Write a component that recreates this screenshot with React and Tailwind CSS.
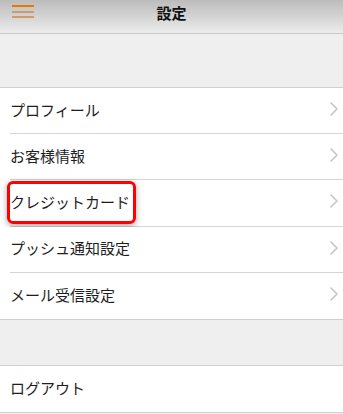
const items = ["プロフィール", "お客様情報", "クレジットカード", "プッシュ通知設定", "メール受信設定"];

function Chevron() {
  return (
    <svg width="8" height="14" viewBox="0 0 8 14" fill="none" className="mr-[5px]">
      <polyline points="1,1 7,7 1,13" stroke="#c5c5ca" strokeWidth="1.6" strokeLinecap="round" strokeLinejoin="round" />
    </svg>
  );
}

function Row({ label, last, chevron = true, highlight }) {
  return (
    <div className="relative flex h-[46.2px] items-center bg-white pl-[10px]">
      <div className={`flex h-full flex-1 items-center pb-[3px] ${last ? "" : "border-b border-[#d4d4d4]"}`}>
        <span className="flex-1 text-[15px] leading-none text-[#1e1e1e]">{label}</span>
        {chevron && <Chevron />}
      </div>
      {highlight && (
        <div className="pointer-events-none absolute left-[7px] top-[1px] h-[43px] w-[129px] rounded-[6px] border-[3px] border-[#ff0000] shadow-[0_2px_6px_rgba(0,0,0,0.35)]" />
      )}
    </div>
  );
}

export default function App() {
  return (
    <div
      className="h-[414px] w-[343px] overflow-hidden bg-[#efefef]"
      style={{ fontFamily: '"Noto Sans CJK JP", "Noto Sans", sans-serif' }}
    >
      {/* Header */}
      <div className="relative flex h-[34px] items-center justify-center border-b border-[#c8c8c8] bg-gradient-to-b from-[#bcbcbc] to-[#ececec] pb-[9px]">
        <button className="absolute left-[12px] top-[5px] flex w-[22px] flex-col gap-[3.5px]">
          <span className="block h-[2px] w-full bg-[#e07a00]" />
          <span className="block h-[2px] w-full bg-[#d09a6a]" />
          <span className="block h-[2px] w-full bg-[#d09a6a]" />
        </button>
        <h1 className="text-[15px] font-bold leading-none text-[#111]">設定</h1>
      </div>

      <div className="h-[53px]" />

      <div className="border-y border-[#cfcfcf]">
        {items.map((label, i) => (
          <Row key={label} label={label} last={i === items.length - 1} highlight={i === 2} />
        ))}
      </div>

      <div className="h-[45px]" />

      <div className="border-y border-[#cfcfcf]">
        <Row label="ログアウト" last chevron={false} />
      </div>
    </div>
  );
}
